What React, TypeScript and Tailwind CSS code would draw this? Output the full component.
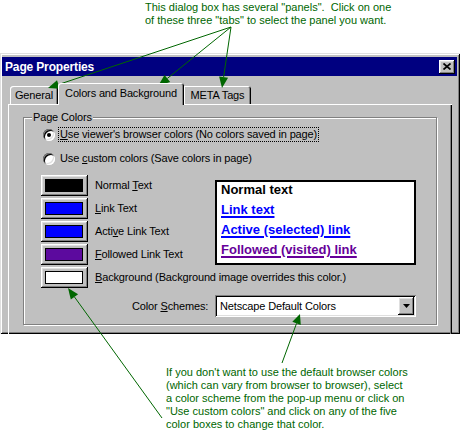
const raised =
  'shadow-[inset_-1px_-1px_0_#000,inset_1px_1px_0_#fff,inset_-2px_-2px_0_#808080,inset_2px_2px_0_#dfdfdf]';
const sunken =
  'shadow-[inset_1px_1px_0_#808080,inset_-1px_-1px_0_#fff,inset_2px_2px_0_#000,inset_-2px_-2px_0_#dfdfdf]';

type Arrow = { from: [number, number]; to: [number, number]; len?: number; half?: number };

const arrows: Arrow[] = [
  { from: [231, 27], to: [48, 88], len: 11, half: 4.5 },
  { from: [231, 27], to: [158, 86], len: 12, half: 4.5 },
  { from: [231, 27], to: [222, 88], len: 11, half: 4.5 },
  { from: [162, 418], to: [68, 288], len: 11, half: 4.5 },
  { from: [282, 363], to: [300, 314], len: 10, half: 4.5 },
];

function ArrowShape({ from, to, len = 11, half = 4 }: Arrow) {
  const dx = to[0] - from[0];
  const dy = to[1] - from[1];
  const d = Math.hypot(dx, dy);
  const ux = dx / d;
  const uy = dy / d;
  const bx = to[0] - ux * len;
  const by = to[1] - uy * len;
  const pts = `${to[0]},${to[1]} ${bx - uy * half},${by + ux * half} ${bx + uy * half},${by - ux * half}`;
  return (
    <g>
      <line x1={from[0]} y1={from[1]} x2={bx} y2={by} stroke="#006600" strokeWidth={1} />
      <polygon points={pts} fill="#006600" />
    </g>
  );
}

function Radio({ checked }: { checked?: boolean }) {
  return (
    <span className={`flex h-[12px] w-[12px] shrink-0 items-center justify-center rounded-full bg-white ${sunken}`}>
      {checked && <span className="h-[4px] w-[4px] rounded-full bg-black" />}
    </span>
  );
}

function Swatch({ color }: { color: string }) {
  return (
    <div className={`flex h-[21px] w-[47px] shrink-0 items-start bg-[#c0c0c0] pl-[4px] pt-[4px] ${raised}`}>
      <div className={`h-[13px] w-[38px] border border-black ${color}`} />
    </div>
  );
}

const colorRows = [
  { color: 'bg-black', pre: 'Normal ', key: 'T', post: 'ext' },
  { color: 'bg-[#0000ff]', pre: '', key: 'L', post: 'ink Text' },
  { color: 'bg-[#0000ff]', pre: 'Acti', key: 'v', post: 'e Link Text' },
  { color: 'bg-[#5c0a9e]', pre: '', key: 'F', post: 'ollowed Link Text' },
];

export default function App() {
  return (
    <div className="relative h-[432px] w-[461px] overflow-hidden bg-white font-['Liberation_Sans',Arial,sans-serif] text-[11px] text-black">
      <div className="h-[53px] pl-[145px] pt-[1px] text-[11px] leading-[13px] text-[#006600]">
        <div>This dialog box has several "panels".&nbsp; Click on one</div>
        <div>of these three "tabs" to select the panel you want.</div>
      </div>

      <div
        className={`h-[281px] w-[460px] overflow-hidden bg-[#c0c0c0] pl-[2px] pr-[3px] pt-[4px] tracking-[-0.15px] shadow-[inset_1px_1px_0_#dfdfdf,inset_-1px_-1px_0_#000,inset_2px_2px_0_#fff,inset_-2px_-2px_0_#808080]`}
      >
        <div className="flex h-[19px] items-center justify-between bg-[#000080] pl-[3px] pr-[2px]">
          <span className="text-[12px] font-bold text-white">Page Properties</span>
          <div className={`flex h-[14px] w-[16px] items-center justify-center bg-[#c0c0c0] ${raised}`}>
            <svg width="8" height="7" viewBox="0 0 8 7">
              <path d="M0.5 0.5 L7.5 6.5 M7.5 0.5 L0.5 6.5" stroke="#000" strokeWidth="1.7" />
            </svg>
          </div>
        </div>

        <div className="ml-[8px] mt-[7px] flex h-[21px] items-end">
          <div className="flex h-[18px] w-[48px] items-center justify-center rounded-tl-[3px] shadow-[inset_1px_1px_0_#fff,inset_-1px_0_0_#000,inset_-2px_0_0_#808080]">
            General
          </div>
          <div className="relative z-10 -mb-[1px] flex h-[22px] w-[126px] items-center justify-center rounded-t-[3px] bg-[#c0c0c0] pb-[2px] shadow-[inset_1px_1px_0_#fff,inset_-1px_0_0_#000,inset_-2px_0_0_#808080]">
            Colors and Background
          </div>
          <div className="flex h-[18px] w-[67px] items-center justify-center rounded-tr-[3px] shadow-[inset_1px_1px_0_#fff,inset_-1px_0_0_#000,inset_-2px_0_0_#808080]">
            META Tags
          </div>
        </div>

        <div className="ml-[6px] h-[260px] w-[444px] pt-[13px] shadow-[inset_1px_1px_0_#fff,inset_-1px_-1px_0_#000,inset_-2px_-2px_0_#808080]">
          <div className="relative ml-[15px] h-[208px] w-[414px] border border-[#808080] pl-[19px] pt-[9px] shadow-[1px_1px_0_#fff,inset_1px_1px_0_#fff]">
            <span className="absolute left-[8px] top-[-7px] bg-[#c0c0c0] px-[1px] leading-[13px]">Page Colors</span>

            <div className="flex h-[15px] items-center">
              <Radio checked />
              <span className="ml-[3px] border border-dotted border-black px-[1px] leading-[13px]">
                <span className="underline">U</span>se viewer's browser colors (No colors saved in page)
              </span>
            </div>
            <div className="mt-[9px] flex h-[15px] items-center">
              <Radio />
              <span className="ml-[4px] px-[1px] leading-[13px]">
                Use <span className="underline">c</span>ustom colors (Save colors in page)
              </span>
            </div>

            <div className="-ml-[2px] mt-[9px] flex">
              <div className="flex w-[174px] flex-col gap-[2px]">
                {colorRows.map((r, i) => (
                  <div key={i} className="flex h-[21px] items-center">
                    <Swatch color={r.color} />
                    <span className="ml-[7px]">
                      {r.pre}
                      <span className="underline">{r.key}</span>
                      {r.post}
                    </span>
                  </div>
                ))}
              </div>
              <div className="mt-[5px] h-[85px] w-[201px] border-2 border-black bg-white pl-[4px] text-[13px] font-bold tracking-normal">
                <div className="-mt-[2px] leading-[20px]">
                  <div>Normal text</div>
                  <div className="text-[#0000ff] underline decoration-2 underline-offset-[2px]">Link text</div>
                  <div className="text-[#0000ff] underline decoration-2 underline-offset-[2px]">Active (selected) link</div>
                  <div className="text-[#660099] underline decoration-2 underline-offset-[2px]">Followed (visited) link</div>
                </div>
              </div>
            </div>

            <div className="-ml-[2px] mt-[2px] flex h-[21px] items-center">
              <Swatch color="bg-white" />
              <span className="ml-[7px]">
                <span className="underline">B</span>ackground (Background image overrides this color.)
              </span>
            </div>

            <div className="ml-[89px] mt-[7px] flex items-center">
              <span className="w-[83px]">
                Color <span className="underline">S</span>chemes:
              </span>
              <div className={`flex h-[22px] w-[201px] items-center justify-between bg-white pl-[5px] pr-[2px] ${sunken}`}>
                <span>Netscape Default Colors</span>
                <div className={`flex h-[18px] w-[16px] items-center justify-center bg-[#c0c0c0] ${raised}`}>
                  <svg width="7" height="4" viewBox="0 0 7 4">
                    <path d="M0 0 H7 L3.5 4 Z" fill="#000" />
                  </svg>
                </div>
              </div>
            </div>
          </div>
        </div>
      </div>

      <div className="pl-[166px] pt-[32px] text-[11px] leading-[13px] text-[#006600]">
        <div>If you don't want to use the default browser colors</div>
        <div>(which can vary from browser to browser), select</div>
        <div>a color scheme from the pop-up menu or click on</div>
        <div>"Use custom colors" and click on any of the five</div>
        <div>color boxes to change that color.</div>
      </div>

      <svg className="pointer-events-none absolute left-0 top-0" width="461" height="432" viewBox="0 0 461 432">
        {arrows.map((a, i) => (
          <ArrowShape key={i} {...a} />
        ))}
      </svg>
    </div>
  );
}
